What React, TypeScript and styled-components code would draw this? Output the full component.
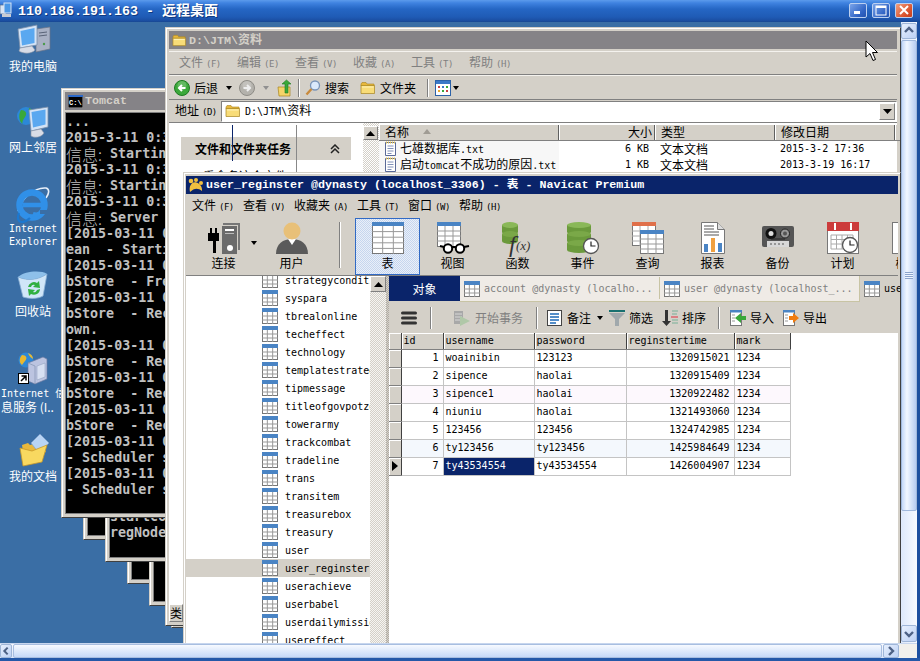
import React from "react";
import styled, { createGlobalStyle } from "styled-components";

const monoStack = `"DejaVu Sans Mono", "Noto Sans CJK SC", monospace`;
const boldStack = `"Liberation Mono", "Noto Sans CJK SC", monospace`;
const silver = "#d4d0c8";
const navy = "#0a246a";
const dither = (a: string, b: string) =>
  `repeating-conic-gradient(${a} 0 25%, ${b} 0 50%) 0 0 / 2px 2px`;

const Global = createGlobalStyle`
  html, body { margin: 0; padding: 0; width: 920px; height: 661px; overflow: hidden; }
  body { font: 12px/14px "Noto Sans CJK SC", sans-serif; color: #000; }
  * { box-sizing: border-box; }
`;

/* ---------- remote desktop frame ---------- */
const Frame = styled.div`
  width: 920px;
  height: 661px;
  display: flex;
  flex-direction: column;
  background: #1c4f9f;
  overflow: hidden;
`;
const RdpBar = styled.div`
  height: 22px;
  flex: none;
  display: flex;
  align-items: center;
  padding: 0 7px 0 0;
  background: linear-gradient(180deg, #5c9bec 0, #3f82e0 3px, #2566c4 9px, #1f5bb5 17px, #1a4da0 21px, #17468f 22px);
`;
const RdpTitle = styled.div`
  margin-left: 6px;
  flex: 1;
  color: #fff;
  font: bold 13.33px/22px ${boldStack};
  white-space: pre;
  text-shadow: 1px 1px 0 #103a80;
  span { font-size: 14px; }
`;
const WinButton = styled.div<{ $close?: boolean }>`
  width: 18px;
  height: 15px;
  margin: 0 0 2px 5px;
  border: 1px solid #bcd0f0;
  border-radius: 2px;
  display: flex;
  align-items: center;
  justify-content: center;
  background: ${({ $close }) =>
    $close
      ? "linear-gradient(135deg, #f0a080, #d8502a 70%, #c04020)"
      : "linear-gradient(135deg, #7aa4ea, #2f63c4 70%, #2452ae)"};
`;
const Middle = styled.div`
  flex: 1;
  min-height: 0;
  display: flex;
  padding-right: 3px;
`;
const Desktop = styled.div`
  position: relative;
  width: 901px;
  overflow: hidden;
  background: #3a6ea5;
`;
const VScroll = styled.div`
  width: 16px;
  flex: none;
  display: flex;
  flex-direction: column;
  padding: 1px 0;
  background: linear-gradient(90deg, #dde8fb, #f7faff);
`;
const ScrollBtn = styled.div<{ $w?: number; $h?: number }>`
  width: ${({ $w }) => $w ?? 16}px;
  height: ${({ $h }) => $h ?? 16}px;
  flex: none;
  display: flex;
  align-items: center;
  justify-content: center;
  border: 1px solid #9fb6d8;
  border-radius: 2px;
  background: linear-gradient(135deg, #e6effd, #bdd1f4);
`;
const VThumb = styled.div`
  height: 471px;
  margin-top: 1px;
  flex: none;
  display: flex;
  align-items: center;
  justify-content: center;
  border: 1px solid #a0b8dc;
  border-radius: 2px;
  background: linear-gradient(90deg, #c4d8f8, #f2f7ff 35%, #b6ccf2);
`;
const VTrack = styled.div`
  flex: 1;
`;
const Grip = styled.div`
  width: 8px;
  height: 7px;
  background: repeating-linear-gradient(180deg, #8ba4cc 0 1px, #eef4ff 1px 2px);
`;
const HScroll = styled.div`
  height: 15px;
  flex: none;
  margin-right: 3px;
  display: flex;
  background: linear-gradient(180deg, #f6f9ff, #dbe6fa);
  border-top: 1px solid #c7d6ee;
`;
const HThumb = styled.div`
  flex: 1;
  margin: 0 1px;
  border: 1px solid #a8bee0;
  border-radius: 2px;
  background: linear-gradient(180deg, #f7faff, #c6d9f8);
`;
const Corner = styled.div`
  width: 18px;
  flex: none;
  background: #f1f0ec;
`;
const BottomEdge = styled.div`
  height: 3px;
  flex: none;
  background: #2458a8;
`;

/* ---------- desktop icons ---------- */
const IconSpot = styled.div<{ $y: number }>`
  position: absolute;
  left: 0;
  top: ${({ $y }) => $y}px;
  width: 66px;
  display: flex;
  flex-direction: column;
  align-items: center;
  color: #fff;
  line-height: 12px;
  white-space: pre;
`;
const IconLine = styled.span<{ $latin?: boolean; $left?: boolean }>`
  height: ${({ $latin }) => ($latin ? 13 : 12)}px;
  align-self: ${({ $left }) => ($left ? "flex-start" : "center")};
  margin-left: ${({ $left }) => ($left ? 1 : 0)}px;
  font: ${({ $latin }) => ($latin ? `10px/12px ${monoStack}` : `12px/12px "Noto Sans CJK SC", sans-serif`)};
`;

/* ---------- generic classic window ---------- */
const ClassicWindow = styled.div<{ $x: number; $y: number; $w: number; $h: number; $pad?: number }>`
  position: absolute;
  left: ${({ $x }) => $x}px;
  top: ${({ $y }) => $y}px;
  width: ${({ $w }) => $w}px;
  height: ${({ $h }) => $h}px;
  display: flex;
  flex-direction: column;
  padding: ${({ $pad }) => $pad ?? 3}px;
  overflow: hidden;
  background: ${silver};
  border: 1px solid ${silver};
  border-right-color: #404040;
  border-bottom-color: #404040;
  box-shadow: inset 1px 1px 0 #fff;
`;
const InactiveTitle = styled.div`
  flex: none;
  height: 18px;
  margin-bottom: 2px;
  padding-left: 3px;
  display: flex;
  align-items: center;
  gap: 2px;
  background: #858387;
  color: ${silver};
  font: bold 11.67px/18px ${boldStack};
  white-space: pre;
`;
const Console = styled.div<{ $end?: boolean; $pad?: number }>`
  flex: 1;
  min-height: 0;
  display: flex;
  flex-direction: column;
  justify-content: ${({ $end }) => ($end ? "flex-end" : "flex-start")};
  padding: ${({ $pad }) => ($pad ? `0 0 ${$pad}px` : "1px 0 0")};
  background: #000;
  border: 1px solid #808080;
  border-right: 0;
  color: #c0c0c0;
  overflow: hidden;
  font: 600 13.33px/16px ${monoStack};
  white-space: pre;
`;
const ConsoleLine = styled.div`
  height: 16px;
  flex: none;
  overflow: visible;
`;
const ConsoleZh = styled.span`
  font: 300 16px/16px "Noto Sans CJK SC", sans-serif;
  vertical-align: top;
`;

/* ---------- explorer ---------- */
const ExpMenu = styled.div`
  flex: none;
  height: 24px;
  display: flex;
  align-items: center;
  gap: 17px;
  padding-left: 10px;
  color: #808080;
  border-top: 1px solid #f4f2ee;
  border-bottom: 1px solid #808080;
`;
const ExpToolbar = styled.div`
  flex: none;
  height: 25px;
  display: flex;
  align-items: center;
  padding-left: 5px;
  border-bottom: 1px solid #808080;
  border-top: 1px solid #f4f2ee;
`;
const Item = styled.span<{ $ml?: number }>`
  display: inline-flex;
  align-items: center;
  flex: none;
  margin-left: ${({ $ml }) => $ml ?? 0}px;
`;
const TextAfter = styled.span<{ $gap?: number }>`
  margin-left: ${({ $gap }) => $gap ?? 4}px;
`;
const Sep = styled.span<{ $ml: number; $h?: number }>`
  flex: none;
  width: 2px;
  height: ${({ $h }) => $h ?? 18}px;
  margin-left: ${({ $ml }) => $ml}px;
  border-left: 1px solid #808080;
  border-right: 1px solid #fff;
`;
const Caret = styled.span<{ $ml: number; $grey?: boolean }>`
  flex: none;
  width: 0;
  height: 0;
  margin-left: ${({ $ml }) => $ml}px;
  border: 3px solid transparent;
  border-bottom: 0;
  border-top: 4px solid ${({ $grey }) => ($grey ? "#909090" : "#000")};
`;
const Latin = styled.span<{ $size?: number }>`
  font: ${({ $size }) => $size ?? 10}px/14px ${monoStack};
  white-space: pre;
`;
const Key = styled.span`
  display: inline-block;
  width: 14px;
  margin-left: 3px;
  font: 9px/14px ${monoStack};
  letter-spacing: -0.5px;
`;
const AddressRow = styled.div`
  flex: none;
  height: 23px;
  display: flex;
  align-items: center;
  padding-left: 6px;
  border-bottom: 1px solid #808080;
`;
const AddressBox = styled.div`
  width: 676px;
  height: 21px;
  margin-left: 5px;
  padding-left: 3px;
  display: flex;
  align-items: center;
  background: #fff;
  border: 1px solid #808080;
  border-right-color: #fff;
  border-bottom-color: #fff;
`;
const AddressText = styled.div`
  flex: 1;
  margin-left: 4px;
`;
const ComboBtn = styled.div`
  width: 16px;
  height: 17px;
  margin-right: 1px;
  display: flex;
  align-items: center;
  justify-content: center;
  background: ${silver};
  border: 1px solid #808080;
  border-top-color: #fff;
  border-left-color: #fff;
`;
const ExpBody = styled.div`
  flex: 1;
  min-height: 0;
  display: flex;
  background: #fff;
  position: relative;
`;
const TaskPane = styled.div`
  width: 194px;
  flex: none;
  display: flex;
  flex-direction: column;
  padding-top: 14px;
`;
const TaskHead = styled.div`
  width: 170px;
  height: 23px;
  margin-left: 12px;
  padding: 0 11px 0 14px;
  flex: none;
  display: flex;
  align-items: center;
  justify-content: space-between;
  background: ${silver};
  font-weight: 700;
`;
const TaskRow = styled.div`
  margin: 9px 0 0 34px;
  flex: 1;
  white-space: pre;
`;
const StubBtn = styled.div`
  width: 14px;
  height: 18px;
  flex: none;
  display: flex;
  align-items: center;
  justify-content: center;
  background: ${silver};
  border: 1px solid #fff;
  border-right-color: #808080;
  border-bottom-color: #808080;
`;
const Artifact = styled.div<{ $x: number; $h: number; $c: string }>`
  position: absolute;
  left: ${({ $x }) => $x}px;
  top: 2px;
  width: 1px;
  height: ${({ $h }) => $h}px;
  background: ${({ $c }) => $c};
`;
const FileScroll = styled.div`
  width: 16px;
  flex: none;
  padding-top: 3px;
  background: ${dither("#d4d0c8", "#fff")};
`;
const RaisedBtn = styled.div<{ $h?: number; $w?: number }>`
  width: ${({ $w }) => $w ?? 16}px;
  height: ${({ $h }) => $h ?? 14}px;
  flex: none;
  display: flex;
  align-items: center;
  justify-content: center;
  background: ${silver};
  border: 1px solid #808080;
  border-top-color: #fff;
  border-left-color: #fff;
`;
const FileList = styled.div`
  flex: 1;
  display: flex;
  flex-direction: column;
  padding-top: 2px;
`;
const FileHead = styled.div`
  display: flex;
  height: 16px;
  border-bottom: 1px solid #808080;
`;
const HeadCell = styled.div<{ $w: number; $right?: boolean }>`
  width: ${({ $w }) => $w}px;
  flex: none;
  display: flex;
  align-items: center;
  justify-content: ${({ $right }) => ($right ? "flex-end" : "flex-start")};
  padding: 0 2px 2px 5px;
  background: ${silver};
  border-left: 1px solid #fff;
  border-right: 1px solid #606060;
`;
const SortMark = styled.span`
  width: 0;
  height: 0;
  margin-left: 14px;
  border: 4px solid transparent;
  border-top: 0;
  border-bottom: 5px solid #a09c94;
`;
const FileRow = styled.div`
  display: flex;
  height: 16px;
  align-items: center;
  white-space: pre;
`;
const FileCell = styled.div<{ $w: number; $right?: boolean; $shade?: boolean }>`
  width: ${({ $w }) => $w}px;
  height: 16px;
  flex: none;
  display: flex;
  align-items: center;
  justify-content: ${({ $right }) => ($right ? "flex-end" : "flex-start")};
  padding: ${({ $right }) => ($right ? "0 6px 0 0" : "0 0 0 5px")};
  background: ${({ $shade }) => ($shade ? "#f7f7f7" : "#fff")};
`;

/* ---------- navicat ---------- */
const NavTitle = styled.div`
  flex: none;
  height: 18px;
  margin-top: 1px;
  padding-left: 2px;
  display: flex;
  align-items: center;
  gap: 3px;
  background: ${navy};
  color: #fff;
  font: bold 11.67px/18px ${boldStack};
  white-space: pre;
`;
const NavMenu = styled.div`
  flex: none;
  height: 24px;
  padding-left: 6px;
  display: flex;
  align-items: center;
  gap: 10px;
`;
const NavToolbar = styled.div`
  flex: none;
  height: 58px;
  display: flex;
  overflow: hidden;
  padding-left: 5px;
  border-bottom: 1px solid #808080;
`;
const ToolItem = styled.div<{ $active?: boolean; $ml?: number }>`
  position: relative;
  width: 65px;
  height: 57px;
  flex: none;
  margin-left: ${({ $ml }) => $ml ?? 0}px;
  display: flex;
  flex-direction: column;
  align-items: center;
  padding-top: 4px;
  background: ${({ $active }) => ($active ? dither("#c6d6ee", "#e9eff9") : "transparent")};
  box-shadow: ${({ $active }) => ($active ? "inset 0 0 0 1px #316ac5" : "none")};
`;
const ToolLabel = styled.span`
  margin-top: 2px;
  font-size: 12px;
  line-height: 14px;
`;
const ToolCaret = styled.span`
  position: absolute;
  right: -1px;
  top: 23px;
  width: 0;
  height: 0;
  border: 3px solid transparent;
  border-bottom: 0;
  border-top: 4px solid #000;
`;
const NavSep = styled.div`
  flex: none;
  width: 2px;
  height: 46px;
  margin: 4px 14px 0 15px;
  border-left: 1px solid #808080;
  border-right: 1px solid #fff;
`;
const NavBody = styled.div`
  flex: 1;
  min-height: 0;
  display: flex;
`;
const Tree = styled.div`
  width: 184px;
  flex: none;
  background: #fff;
  overflow: hidden;
`;
const TreeRows = styled.div`
  margin-top: -5px;
`;
const TreeRow = styled.div<{ $selected?: boolean }>`
  height: 18px;
  padding-left: 76px;
  display: flex;
  align-items: center;
  gap: 7px;
  background: ${({ $selected }) => ($selected ? silver : "#fff")};
  font: 10px/16px ${monoStack};
  white-space: pre;
  overflow: hidden;
`;
const TreeName = styled.span`
  padding-top: 2px;
`;
const TreeScroll = styled.div`
  width: 16px;
  flex: none;
  background: ${dither("#d4d0c8", "#f6f5f2")};
`;
const Gutter = styled.div`
  width: 3px;
  flex: none;
  background: ${dither("#d4d0c8", "#b0aca4")};
`;
const RightPane = styled.div`
  flex: 1;
  min-width: 0;
  display: flex;
  flex-direction: column;
  background: #fff;
`;
const TabBar = styled.div`
  flex: none;
  height: 26px;
  display: flex;
  background: ${silver};
`;
const ObjectTab = styled.div`
  width: 71px;
  height: 25px;
  flex: none;
  display: flex;
  align-items: center;
  justify-content: center;
  background: ${navy};
  color: #fff;
`;
const TabGroup = styled.div`
  width: 400px;
  flex: none;
  height: 26px;
  display: flex;
  background: #efebe6;
  border-bottom: 1px solid #c8c4a4;
  border-right: 1px solid #c8c4a4;
`;
const DocTab = styled.div<{ $w?: number; $dark?: boolean }>`
  width: ${({ $w }) => $w ?? 200}px;
  flex: none;
  height: 25px;
  padding-left: 4px;
  display: flex;
  align-items: center;
  gap: 4px;
  color: ${({ $dark }) => ($dark ? "#000" : "#808080")};
  font: 10px/25px ${monoStack};
  white-space: pre;
  overflow: hidden;
`;
const TabDivider = styled.span`
  flex: none;
  width: 1px;
  height: 22px;
  margin-top: 1px;
  background: #c8c4a4;
`;
const GridToolbar = styled.div`
  flex: none;
  height: 31px;
  padding: 0 0 0 12px;
  display: flex;
  align-items: center;
  background: ${silver};
`;
const GreyText = styled.span`
  margin-left: 4px;
  color: #808080;
`;
const GridWrap = styled.div`
  flex: 1;
  background: #fff;
`;
const DataTable = styled.table`
  border-collapse: collapse;
  table-layout: fixed;
  width: 401px;
  font: 10px/16px ${monoStack};
`;
const Th = styled.th`
  height: 16px;
  padding: 0 0 0 2px;
  background: ${silver};
  border-right: 1px solid #404040;
  border-bottom: 1px solid #808080;
  box-shadow: inset 1px 1px 0 #fff;
  font-weight: 400;
  line-height: 15px;
  text-align: left;
`;
const RowHead = styled.td`
  padding: 0;
  background: ${silver};
  border-right: 1px solid #404040;
  border-bottom: 1px solid #808080;
  box-shadow: inset 1px 1px 0 #fff;
  vertical-align: middle;
`;
const Td = styled.td<{ $right?: boolean; $bg?: string; $sel?: boolean }>`
  height: 18px;
  padding: ${({ $right }) => ($right ? "0 4px 0 0" : "0 0 0 2px")};
  text-align: ${({ $right }) => ($right ? "right" : "left")};
  background: ${({ $sel, $bg }) => ($sel ? navy : $bg ?? "#fff")};
  color: ${({ $sel }) => ($sel ? "#fff" : "#000")};
  border-right: 1px solid #c4c4c4;
  border-bottom: 1px solid #c4c4c4;
  white-space: pre;
`;
const RowPointer = styled.span`
  display: block;
  width: 0;
  height: 0;
  margin-left: 3px;
  border: 5px solid transparent;
  border-right: 0;
  border-left: 6px solid #000;
`;
const Cursor = styled.svg`
  position: absolute;
  left: 865px;
  top: 18px;
`;

/* ---------- drawings ---------- */
const GridIcon: React.FC<{ w?: number; h?: number; head?: string; band?: number; cols?: number; rows?: number }> = ({
  w = 16, h = 16, head = "#4a84c4", band = 4, cols = 3, rows = 3,
}) => {
  const vs = Array.from({ length: cols - 1 }, (_, i) => ((i + 1) * w) / cols);
  const hs = Array.from({ length: rows - 1 }, (_, i) => band + ((i + 1) * (h - band)) / rows);
  return (
    <svg width={w} height={h} viewBox={`0 0 ${w} ${h}`} style={{ flex: "none" }}>
      <rect x=".5" y=".5" width={w - 1} height={h - 1} fill="#fff" stroke="#777" />
      <rect x="0" y="0" width={w} height={band} fill={head} />
      {vs.map((x) => <line key={x} x1={x} x2={x} y1={band} y2={h} stroke="#999" />)}
      {hs.map((y) => <line key={y} x1="0" x2={w} y1={y} y2={y} stroke="#999" />)}
    </svg>
  );
};
const Chevron: React.FC<{ dir: "up" | "down" | "left" | "right"; c?: string }> = ({ dir, c = "#4d6185" }) => {
  const d = { up: "M2 7l4-4 4 4", down: "M2 4l4 4 4-4", left: "M8 2L4 6l4 4", right: "M4 2l4 4-4 4" }[dir];
  return <svg width="12" height="12" viewBox="0 0 12 12"><path d={d} fill="none" stroke={c} strokeWidth="2.4" /></svg>;
};
const Tri: React.FC<{ up?: boolean }> = ({ up }) => (
  <svg width="9" height="5" viewBox="0 0 9 5"><path d={up ? "M4.500 0L9 5H0z" : "M0 0h9L4.500 5z"} fill="#000" /></svg>
);
const FolderIcon: React.FC<{ s?: number }> = ({ s = 16 }) => (
  <svg width={s} height={s} viewBox="0 0 16 16" style={{ flex: "none" }}>
    <path d="M1 4l1-1.500h4l1 1.500h7v2H1z" fill="#e8b83c" stroke="#a88420" strokeWidth=".6" />
    <path d="M1 13.500V5.500h13.500v8z" fill="#f8dc78" stroke="#a88420" strokeWidth=".7" />
    <path d="M2 7h11.500" stroke="#fff2b8" />
  </svg>
);
const RoundArrow: React.FC<{ on?: boolean }> = ({ on }) => (
  <svg width="16" height="16" viewBox="0 0 16 16" style={{ flex: "none" }}>
    <circle cx="8" cy="8" r="7.500" fill={on ? "#3ca83a" : "#b4b2ac"} stroke={on ? "#1c7a20" : "#8e8c86"} />
    <circle cx="8" cy="5.500" r="4.500" fill="#fff" opacity=".2" />
    {on ? <path d="M11.500 8H5.500M8 5L5 8l3 3" stroke="#fff" strokeWidth="2" fill="none" />
      : <path d="M4.500 8h6M8 5l3 3-3 3" stroke="#eee" strokeWidth="2" fill="none" />}
  </svg>
);
const UpFolder = () => (
  <svg width="16" height="18" viewBox="0 0 16 18" style={{ flex: "none" }}>
    <path d="M1 8h12v9H2z" fill="#f4d468" stroke="#a88420" strokeWidth=".7" />
    <path d="M8 14V5H5l4.500-4L14 5h-3v9z" fill="#3aa83a" stroke="#1c7a20" strokeWidth=".6" />
  </svg>
);
const SearchGlass = () => (
  <svg width="16" height="16" viewBox="0 0 16 16" style={{ flex: "none" }}>
    <circle cx="10" cy="5.500" r="4.500" fill="#dbe9fb" stroke="#7a94b8" strokeWidth="1.300" />
    <path d="M6.500 9L1.500 14.500" stroke="#c88a3c" strokeWidth="2.400" />
  </svg>
);
const ViewsIcon = () => (
  <svg width="16" height="16" viewBox="0 0 16 16" style={{ flex: "none" }}>
    <rect x=".5" y=".5" width="15" height="15" fill="#fff" stroke="#2c62a8" />
    <rect x="1" y="1" width="14" height="3" fill="#3a78c8" />
    {[[3, 6, "#c84040"], [7, 6, "#3a78c8"], [11, 6, "#3aa83a"], [3, 10, "#e8a830"], [7, 10, "#3aa83a"], [11, 10, "#c84040"]].map(([x, y, c]) => (
      <rect key={`${x}${y}`} x={x as number} y={y as number} width="2" height="2" fill={c as string} />
    ))}
  </svg>
);
const TextFile = () => (
  <svg width="13" height="16" viewBox="0 0 13 16" style={{ flex: "none" }}>
    <path d="M1.500 1.500h10v13h-10z" fill="#fff" stroke="#5a6a98" />
    <path d="M2 1.500h9" stroke="#e0c050" strokeDasharray="1 1" strokeWidth="2" />
    <path d="M3.500 5h6M3.500 7.500h6M3.500 10h6M3.500 12.500h4" stroke="#8090b8" />
  </svg>
);

const Db: React.FC<{ w: number; y?: number; layers?: number }> = ({ w, y = 0, layers = 3 }) => (
  <>
    {Array.from({ length: layers }, (_, i) => (
      <g key={i}>
        <rect x="0" y={y + 3 + i * 9} width={w} height="7" fill="#6b9a3c" />
        <ellipse cx={w / 2} cy={y + 10 + i * 9} rx={w / 2} ry="3" fill="#6b9a3c" />
        <ellipse cx={w / 2} cy={y + 3 + i * 9} rx={w / 2} ry="3" fill={i === 0 ? "#8ab858" : "#7aa848"} />
      </g>
    ))}
  </>
);
const Clock: React.FC<{ cx: number; cy: number; r: number }> = ({ cx, cy, r }) => (
  <g>
    <circle cx={cx} cy={cy} r={r} fill="#fff" stroke="#555" strokeWidth="1.300" />
    <path d={`M${cx} ${cy - r + 3}V${cy}H${cx + r - 3}`} fill="none" stroke="#222" strokeWidth="1.200" />
  </g>
);
const BigSvg: React.FC<{ children: React.ReactNode; w?: number }> = ({ children, w = 32 }) => (
  <svg width={w} height="32" viewBox={`0 0 ${w} 32`} style={{ flex: "none", overflow: "visible" }}>{children}</svg>
);
const ConnectIcon = () => (
  <BigSvg>
    <path d="M15 1h17v27h-2V3H15z" fill="#777" />
    <rect x="14" y="4" width="15" height="28" fill="#6b6b6b" />
    <rect x="17" y="7" width="9" height="2" fill="#fff" />
    <rect x="17" y="11" width="9" height="1" fill="#bbb" />
    <circle cx="22" cy="26" r="3" fill="#fff" />
    <path d="M0 12h2V7h2v5h3V7h2v5h2v8H8v12H5V20H0z" fill="#000" transform="translate(0 -1)" />
  </BigSvg>
);
const UserIcon = () => (
  <BigSvg>
    <path d="M0 32c0-10 7-15 16-15s16 5 16 15z" fill="#5a5a5a" />
    <path d="M12 17h8l-4 6z" fill="#fff" />
    <circle cx="16" cy="9" r="8.500" fill="#e8c078" />
  </BigSvg>
);
const ViewIcon = () => (
  <BigSvg w={32}>
    <rect x=".5" y=".5" width="23" height="24" fill="#fff" stroke="#777" />
    <rect x="0" y="0" width="24" height="4" fill="#4a84c4" />
    <path d="M8 4v21M16 4v21M0 9h24M0 14h24M0 19h24" stroke="#999" />
    <circle cx="11" cy="26.500" r="4.200" fill="#fff" stroke="#000" strokeWidth="2" />
    <circle cx="23" cy="26.500" r="4.200" fill="#fff" stroke="#000" strokeWidth="2" />
    <path d="M3 24l4 1M15 25h4M27 25l5-1" stroke="#000" strokeWidth="2" />
  </BigSvg>
);
const FuncIcon = () => (
  <BigSvg>
    <Db w={16} layers={2} />
    <text x="7" y="30" fontFamily="'Liberation Serif', serif" fontStyle="italic" fontSize="24" fill="#333">f</text>
    <text x="14" y="28" fontFamily="'Liberation Serif', serif" fontStyle="italic" fontSize="13" fill="#333">(x)</text>
  </BigSvg>
);
const EventIcon = () => (
  <BigSvg>
    <Db w={24} layers={3} />
    <Clock cx={24} cy={24} r={7.500} />
  </BigSvg>
);
const QueryIcon = () => (
  <BigSvg>
    <rect x=".5" y=".5" width="23" height="23" fill="#fff" stroke="#777" />
    <rect width="24" height="4" fill="#e0704a" />
    <path d="M8 4v20M16 4v20M0 9h24M0 14h24M0 19h24" stroke="#aaa" />
    <rect x="8.500" y="8.500" width="23" height="23" fill="#fff" stroke="#777" />
    <rect x="8" y="8" width="24" height="4" fill="#4a84c4" />
    <path d="M16 12v20M24 12v20M8 17h24M8 22h24M8 27h24" stroke="#999" />
  </BigSvg>
);
const ReportIcon = () => (
  <BigSvg w={24}>
    <path d="M.5.500h16l7 7v24H.5z" fill="#fff" stroke="#777" />
    <path d="M16.500.500v7h7" fill="#ddd" stroke="#777" />
    <path d="M3 4h10M3 7h10M3 10h15M3 13h15" stroke="#555" />
    <rect x="3" y="22" width="4" height="8" fill="#4a84c4" />
    <rect x="10" y="16" width="4" height="14" fill="#f0a040" />
    <rect x="17" y="21" width="4" height="9" fill="#4a84c4" />
  </BigSvg>
);
const BackupIcon = () => (
  <BigSvg>
    <rect y="4" width="32" height="21" rx="2" fill="#555" />
    <circle cx="9" cy="11.500" r="5.500" fill="#111" />
    <circle cx="9" cy="11.500" r="2.500" fill="#ddd" />
    <circle cx="23" cy="11.500" r="4.500" fill="#999" stroke="#222" />
    <circle cx="23" cy="11.500" r="2" fill="#555" />
    <path d="M9 17h14" stroke="#222" />
    <rect x="5" y="19" width="22" height="6" fill="#d8d8d8" />
    <path d="M8 22h16" stroke="#555" strokeDasharray="2 2" />
  </BigSvg>
);
const PlanIcon = () => (
  <BigSvg>
    <rect x=".5" y=".5" width="31" height="31" fill="#fff" stroke="#777" />
    <rect width="32" height="9" fill="#cc3c3c" />
    <rect x="7" y="1" width="2" height="7" fill="#fff" />
    <rect x="23" y="1" width="2" height="7" fill="#fff" />
    <path d="M4 13h22v14H4zM9.500 13v14M15 13v14M20.500 13v14M4 17.500h22M4 22h22" fill="none" stroke="#aaa" />
    <Clock cx={23} cy={23} r={7.500} />
  </BigSvg>
);
const ModelIcon = () => (
  <BigSvg>
    <rect x=".5" y=".5" width="26" height="31" fill="#fff" stroke="#777" />
    <path d="M16 4h5v5h-5zM16 23h5v5h-5z" fill="#aaa" />
    <path d="M18 9l7 7-7 7-7-7z" fill="#4a84c4" />
  </BigSvg>
);
const Burger = () => (
  <svg width="16" height="14" viewBox="0 0 16 14" style={{ flex: "none" }}>
    <path d="M1.500 2h13M1.500 7h13M1.500 12h13" stroke="#333" strokeWidth="3" strokeLinecap="round" />
  </svg>
);
const TxIcon = () => (
  <svg width="17" height="16" viewBox="0 0 17 16" style={{ flex: "none" }}>
    <rect x="0" y="1" width="9" height="13" fill="#a8a8a8" />
    <path d="M1 4h7M1 7h7M1 10h7" stroke="#d8d8d8" />
    <path d="M6 6l10 5-10 5z" fill="#b0c8a8" />
  </svg>
);
const NoteIcon = () => (
  <svg width="16" height="16" viewBox="0 0 16 16" style={{ flex: "none" }}>
    <rect x=".5" y=".5" width="14" height="15" fill="#fff" stroke="#444" />
    <path d="M3 4h9M3 7h9M3 10h9M3 13h6" stroke="#1c6ab8" strokeWidth="1.400" />
  </svg>
);
const FilterIcon = () => (
  <svg width="16" height="16" viewBox="0 0 16 16" style={{ flex: "none" }}>
    <rect width="16" height="2" fill="#187070" />
    <path d="M0 3h16l-6 6v7H6V9z" fill="#a0a8ac" />
  </svg>
);
const SortIcon = () => (
  <svg width="16" height="16" viewBox="0 0 16 16" style={{ flex: "none" }}>
    <path d="M3 0h3v11h3l-4.500 5L0 11h3z" fill="#333" />
    <path d="M10 1h6M10 4h5M10 10h6M10 13h6" stroke="#78b098" />
    <path d="M9 7h7" stroke="#e03040" />
  </svg>
);
const TransferIcon: React.FC<{ out?: boolean }> = ({ out }) => (
  <svg width="16" height="16" viewBox="0 0 16 16" style={{ flex: "none" }}>
    <rect x=".5" y=".5" width="11" height="15" fill="#fff" stroke="#777" />
    <rect x="0" y="0" width="12" height="2.500" fill="#4a84c4" />
    <path d="M2 5h3M2 8h3M2 11h3" stroke="#999" />
    {out ? <path d="M6 6h4V3l6 5-6 5v-3H6z" fill="#f07c10" /> : <path d="M16 6h-5V3L5 8l6 5v-3h5z" fill="#3aa83a" />}
  </svg>
);
const Dolphin = () => (
  <svg width="15" height="15" viewBox="0 0 15 15" style={{ flex: "none" }}>
    <path d="M2 14C.5 8 4 3 8.500 4.500 12 5.500 14.500 9 14 13 10 9.500 6 10 2 14z" fill="#f0c040" />
    <circle cx="3" cy="3" r="2.300" fill="#f0c040" />
    <circle cx="8" cy="2" r="2" fill="#f0c040" />
    <circle cx="13" cy="5" r="2" fill="#f0c040" />
  </svg>
);
const ConsoleGlyph = () => (
  <svg width="15" height="13" viewBox="0 0 15 13" style={{ flex: "none" }}>
    <rect width="15" height="13" fill="#000" stroke="#a8a8a8" />
    <rect x="0" y="0" width="15" height="2" fill="#2a68c8" />
    <text x="1" y="10" fontSize="7" fontFamily="'Liberation Mono', monospace" fill="#fff">C:\</text>
  </svg>
);

const Pc = () => (
  <svg width="36" height="36" viewBox="0 0 36 36">
    <path d="M21 5l14-2v22l-14 3z" fill="#a9b1c4" stroke="#6a7488" strokeWidth=".7" />
    <path d="M24 9l8-1M24 12l8-1" stroke="#5a6478" />
    <circle cx="29" cy="20" r="1.200" fill="#4a9a4a" />
    <path d="M3 5l19-4v20l-17 3z" fill="#d3e3f6" stroke="#7a8ea8" strokeWidth=".8" />
    <path d="M5.500 7l14-3v15l-12.500 2.500z" fill="#5aa8f0" />
    <path d="M5 24l12-2 3 4c-3 4-12 4-16 1z" fill="#d8dce6" stroke="#8a94a6" strokeWidth=".6" />
  </svg>
);
const Net = () => (
  <svg width="36" height="36" viewBox="0 0 36 36">
    <circle cx="11" cy="11" r="9" fill="#2c88d8" />
    <path d="M6 5c4 0 7 3 4 7s-3 6-2 7c-4-2-5-9-2-14zM14 3c4 1 6 5 5 10-3-3-6-7-5-10z" fill="#3aa83a" />
    <path d="M14 5l19-3v20l-17 4z" fill="#d3e3f6" stroke="#7a8ea8" strokeWidth=".8" />
    <path d="M16.500 7l14-2.500v15l-12.500 3z" fill="#5aa8f0" />
    <path d="M16 26l10-2 3 4c-3 5-10 5-13 3z" fill="#d8dce6" stroke="#8a94a6" strokeWidth=".6" />
  </svg>
);
const IeLogo = () => (
  <svg width="36" height="36" viewBox="0 0 36 36">
    <path d="M3 24C6 11 20 0 31 1c4 1 3 6 0 10" fill="none" stroke="#e8f0fa" strokeWidth="1.600" />
    <circle cx="17" cy="18" r="12.500" fill="none" stroke="#3090e8" strokeWidth="6.500" />
    <path d="M8 18h20" stroke="#3090e8" strokeWidth="4.500" />
    <path d="M18 27c4 1 8 0 10-3" fill="none" stroke="#3090e8" strokeWidth="4" />
    <path d="M25 25h8" stroke="#3a6ea5" strokeWidth="4" />
    <path d="M4 26c-2 5-1 9 3 9 3 0 6-2 8-4" fill="none" stroke="#1c78d0" strokeWidth="2.200" />
  </svg>
);
const RecycleBin = () => (
  <svg width="36" height="36" viewBox="0 0 36 36">
    <path d="M3 8c10 4 20 3 29-3l-4 22c-5 3-14 3-20 1z" fill="#d0e6f8" stroke="#8ab0d4" strokeWidth=".8" />
    <path d="M3 8c10 4 20 3 29-3-6-4-22-3-29 3z" fill="#8ec0ea" />
    <path d="M13 18a6 6 0 0 1 9-4l2-2 1 7-7-1 2-2a3 3 0 0 0-4 2zM25 20a6 6 0 0 1-9 5l-2 2-1-7 7 1-2 2a3 3 0 0 0 4-2z" fill="#30b040" />
  </svg>
);
const IisIcon = () => (
  <svg width="36" height="36" viewBox="0 0 36 36">
    <circle cx="11" cy="8" r="7.500" fill="#2c88d8" />
    <path d="M7 3c4 0 6 3 3 6l-3 4c-3-2-3-7 0-10zM13 1c3 1 5 3 5 6-2-1-4-3-5-6z" fill="#e8b830" />
    <path d="M13 11l15-6 4 2v20l-12 5-7-3z" fill="#bcc4e0" stroke="#6a7aa0" strokeWidth=".7" />
    <path d="M13 11l7 3v18" fill="none" stroke="#8a9ab8" strokeWidth=".8" />
    <path d="M22 14l8-3v14l-8 3z" fill="#d8e0f2" stroke="#8a9ab8" strokeWidth=".5" />
    <rect x="3.500" y="21.500" width="10" height="10" fill="#fff" stroke="#000" />
    <path d="M6 29l4.500-4.500M6.500 24h4.500v4.500" stroke="#000" strokeWidth="1.500" fill="none" />
  </svg>
);
const DocsFolder = () => (
  <svg width="36" height="36" viewBox="0 0 36 36">
    <path d="M7 11l6-2 2 2 10-3 6 10-22 7z" fill="#e8b83c" />
    <path d="M16 9L25 0l9 9-10 10z" fill="#b8d4f4" stroke="#7a9cc8" strokeWidth=".6" />
    <path d="M8 32L5 14l12 3 15-6-5 17z" fill="#f8d860" stroke="#c89828" strokeWidth=".8" />
  </svg>
);
const RdpGlyph = () => (
  <svg width="12" height="18" viewBox="0 0 12 18" style={{ flex: "none" }}>
    <rect x="0" y="3" width="6" height="9" fill="#d8e4f4" stroke="#506888" strokeWidth=".7" />
    <rect x="4" y="1" width="7" height="10" fill="#4a98e8" stroke="#d8e4f4" />
    <rect x="2" y="12" width="9" height="3" fill="#c8ccd4" />
  </svg>
);

/* ---------- data ---------- */
const CONSOLE_LINES: React.ReactNode[] = [
  "...",
  "2015-3-11 0:35",
  <><ConsoleZh>信息:</ConsoleZh> Starting</>,
  "2015-3-11 0:35",
  <><ConsoleZh>信息:</ConsoleZh> Starting</>,
  "2015-3-11 0:35",
  <><ConsoleZh>信息:</ConsoleZh> Server s</>,
  "[2015-03-11 00",
  "ean  - Starting",
  "[2015-03-11 00",
  "bStore  - Free",
  "[2015-03-11 00",
  "bStore  - Reco",
  "own.",
  "[2015-03-11 00",
  "bStore  - Reco",
  "[2015-03-11 00",
  "bStore  - Reco",
  "[2015-03-11 00",
  "bStore  - Reco",
  "[2015-03-11 00",
  "- Scheduler st",
  "[2015-03-11 00",
  "- Scheduler st",
];
const TABLES = [
  "strategyconditions", "syspara", "tbrealonline", "techeffect", "technology", "templatestrategy",
  "tipmessage", "titleofgovpotzone", "towerarmy", "trackcombat", "tradeline", "trans", "transitem",
  "treasurebox", "treasury", "user", "user_reginster", "userachieve", "userbabel", "userdailymission", "usereffect",
];
const ROWS = [
  [1, "woainibin", "123123", 1320915021],
  [2, "sipence", "haolai", 1320915409],
  [3, "sipence1", "haolai", 1320922482],
  [4, "niuniu", "haolai", 1321493060],
  [5, "123456", "123456", 1324742985],
  [6, "ty123456", "ty123456", 1425984649],
  [7, "ty43534554", "ty43534554", 1426004907],
] as const;
const rowBg = (id: number) => (id === 3 ? "#fdf8fd" : id === 6 ? "#f4f8fd" : "#fff");

const Mnemonic: React.FC<{ label: string; k: string }> = ({ label, k }) => (
  <span>{label}<Key>({k})</Key></span>
);

export default function App() {
  return (
    <Frame>
      <Global />
      <RdpBar>
        <RdpGlyph />
        <RdpTitle>110.186.191.163 - <span>远程桌面</span></RdpTitle>
        <WinButton>
          <svg width="10" height="10"><rect x="1" y="6" width="6" height="3" fill="#fff" /></svg>
        </WinButton>
        <WinButton>
          <svg width="12" height="11"><rect x="1" y="1" width="10" height="9" fill="none" stroke="#fff" /><rect x="1" y="1" width="10" height="2" fill="#fff" /></svg>
        </WinButton>
        <WinButton $close>
          <svg width="12" height="12"><path d="M2 2l8 8M10 2l-8 8" stroke="#fff" strokeWidth="2" /></svg>
        </WinButton>
      </RdpBar>

      <Middle>
        <Desktop>
          <IconSpot $y={2}><Pc /><IconLine>我的电脑</IconLine></IconSpot>
          <IconSpot $y={83}><Net /><IconLine>网上邻居</IconLine></IconSpot>
          <IconSpot $y={165}><IeLogo /><IconLine $latin>Internet</IconLine><IconLine $latin>Explorer</IconLine></IconSpot>
          <IconSpot $y={247}><RecycleBin /><IconLine>回收站</IconLine></IconSpot>
          <IconSpot $y={330}><IisIcon /><IconLine $latin $left>Internet 信</IconLine><IconLine $left>息服务 (I..</IconLine></IconSpot>
          <IconSpot $y={412}><DocsFolder /><IconLine>我的文档</IconLine></IconSpot>

          <ClassicWindow $x={83} $y={300} $w={90} $h={218}><Console $end $pad={16} /></ClassicWindow>
          <ClassicWindow $x={127} $y={340} $w={50} $h={222}><Console $end $pad={16} /></ClassicWindow>
          <ClassicWindow $x={149} $y={360} $w={30} $h={224}><Console $end $pad={32}>  at</Console></ClassicWindow>
          <ClassicWindow $x={105} $y={300} $w={70} $h={240}>
            <Console $end $pad={16}><span>startco</span><span>regNode</span></Console>
          </ClassicWindow>

          <ClassicWindow $x={61} $y={66} $w={120} $h={430}>
            <InactiveTitle>
              <ConsoleGlyph /><span>Tomcat</span>
            </InactiveTitle>
            <Console>
              {CONSOLE_LINES.map((line, i) => <ConsoleLine key={i}>{line}</ConsoleLine>)}
            </Console>
          </ClassicWindow>

          <ClassicWindow $x={171} $y={400} $w={20} $h={206} />

          <ClassicWindow $x={165} $y={5} $w={736} $h={599}>
            <InactiveTitle>
              <FolderIcon s={15} /><span>D:\JTM\<span style={{ fontFamily: "'Noto Sans CJK SC'", fontSize: 12 }}>资料</span></span>
            </InactiveTitle>
            <ExpMenu>
              <Mnemonic label="文件" k="F" />
              <Mnemonic label="编辑" k="E" />
              <Mnemonic label="查看" k="V" />
              <Mnemonic label="收藏" k="A" />
              <Mnemonic label="工具" k="T" />
              <Mnemonic label="帮助" k="H" />
            </ExpMenu>
            <ExpToolbar>
              <Item><RoundArrow on /><TextAfter>后退</TextAfter></Item>
              <Caret $ml={8} />
              <Item $ml={7}><RoundArrow /></Item>
              <Caret $ml={8} $grey />
              <Item $ml={8}><UpFolder /></Item>
              <Sep $ml={5} />
              <Item $ml={5}><SearchGlass /><TextAfter>搜索</TextAfter></Item>
              <Item $ml={11}><FolderIcon /><TextAfter>文件夹</TextAfter></Item>
              <Sep $ml={11} />
              <Item $ml={6}><ViewsIcon /></Item>
              <Caret $ml={2} />
            </ExpToolbar>
            <AddressRow>
              <Mnemonic label="地址" k="D" />
              <AddressBox>
                <FolderIcon />
                <AddressText><Latin>D:\JTM\</Latin>资料</AddressText>
                <ComboBtn><Tri /></ComboBtn>
              </AddressBox>
            </AddressRow>
            <ExpBody>
              <TaskPane>
                <TaskHead>
                  <span>文件和文件夹任务</span>
                  <svg width="10" height="10" viewBox="0 0 10 10"><path d="M1 5l4-4 4 4M1 9l4-4 4 4" fill="none" stroke="#222" strokeWidth="1.500" /></svg>
                </TaskHead>
                <TaskRow>重命名这个文件</TaskRow>
                <StubBtn>类</StubBtn>
              </TaskPane>
              <Artifact $x={63} $h={36} $c={navy} />
              <Artifact $x={127} $h={50} $c="#888" />
              <FileScroll><RaisedBtn $w={15}><Tri up /></RaisedBtn></FileScroll>
              <FileList>
                <FileHead>
                  <HeadCell $w={180}><span>名称</span><SortMark /></HeadCell>
                  <HeadCell $w={96} $right>大小</HeadCell>
                  <HeadCell $w={120}>类型</HeadCell>
                  <HeadCell $w={120}>修改日期</HeadCell>
                  <HeadCell $w={6} />
                </FileHead>
                <FileRow>
                  <FileCell $w={180} $shade><TextFile /><TextAfter $gap={3}>七雄数据库<Latin>.txt</Latin></TextAfter></FileCell>
                  <FileCell $w={96} $right><Latin>6 KB</Latin></FileCell>
                  <FileCell $w={120}>文本文档</FileCell>
                  <FileCell $w={120}><Latin>2015-3-2 17:36</Latin></FileCell>
                </FileRow>
                <FileRow>
                  <FileCell $w={180} $shade><TextFile /><TextAfter $gap={3}>启动<Latin>tomcat</Latin>不成功的原因<Latin>.txt</Latin></TextAfter></FileCell>
                  <FileCell $w={96} $right><Latin>1 KB</Latin></FileCell>
                  <FileCell $w={120}>文本文档</FileCell>
                  <FileCell $w={120}><Latin>2013-3-19 16:17</Latin></FileCell>
                </FileRow>
              </FileList>
            </ExpBody>
          </ClassicWindow>

          <ClassicWindow $x={183} $y={150} $w={718} $h={475} $pad={2}>
            <NavTitle>
              <Dolphin />
              <span>user_reginster @dynasty (localhost_3306) - 表 - Navicat Premium</span>
            </NavTitle>
            <NavMenu>
              <Mnemonic label="文件" k="F" />
              <Mnemonic label="查看" k="V" />
              <Mnemonic label="收藏夹" k="A" />
              <Mnemonic label="工具" k="T" />
              <Mnemonic label="窗口" k="W" />
              <Mnemonic label="帮助" k="H" />
            </NavMenu>
            <NavToolbar>
              <ToolItem><ConnectIcon /><ToolLabel>连接</ToolLabel><ToolCaret /></ToolItem>
              <ToolItem $ml={3}><UserIcon /><ToolLabel>用户</ToolLabel></ToolItem>
              <NavSep />
              <ToolItem $active><GridIcon w={32} h={32} cols={3} rows={5} /><ToolLabel>表</ToolLabel></ToolItem>
              <ToolItem><ViewIcon /><ToolLabel>视图</ToolLabel></ToolItem>
              <ToolItem><FuncIcon /><ToolLabel>函数</ToolLabel></ToolItem>
              <ToolItem><EventIcon /><ToolLabel>事件</ToolLabel></ToolItem>
              <ToolItem><QueryIcon /><ToolLabel>查询</ToolLabel></ToolItem>
              <ToolItem><ReportIcon /><ToolLabel>报表</ToolLabel></ToolItem>
              <ToolItem><BackupIcon /><ToolLabel>备份</ToolLabel></ToolItem>
              <ToolItem><PlanIcon /><ToolLabel>计划</ToolLabel></ToolItem>
              <ToolItem><ModelIcon /><ToolLabel>模型</ToolLabel></ToolItem>
            </NavToolbar>
            <NavBody>
              <Tree>
                <TreeRows>
                  {TABLES.map((name) => (
                    <TreeRow key={name} $selected={name === "user_reginster"}>
                      <GridIcon />
                      <TreeName>{name}</TreeName>
                    </TreeRow>
                  ))}
                </TreeRows>
              </Tree>
              <TreeScroll><RaisedBtn $h={16}><Tri up /></RaisedBtn></TreeScroll>
              <Gutter />
              <RightPane>
                <TabBar>
                  <ObjectTab>对象</ObjectTab>
                  <TabGroup>
                    <DocTab $w={199}><GridIcon />account @dynasty (localho...</DocTab>
                    <TabDivider />
                    <DocTab $w={199}><GridIcon />user @dynasty (localhost_...</DocTab>
                  </TabGroup>
                  <DocTab $w={60} $dark><GridIcon />user_reginster</DocTab>
                </TabBar>
                <GridToolbar>
                  <Burger />
                  <Sep $ml={13} $h={22} />
                  <Item $ml={22}><TxIcon /><GreyText>开始事务</GreyText></Item>
                  <Sep $ml={13} $h={22} />
                  <Item $ml={9}><NoteIcon /><TextAfter>备注</TextAfter></Item>
                  <Caret $ml={6} />
                  <Item $ml={6}><FilterIcon /><TextAfter>筛选</TextAfter></Item>
                  <Item $ml={9}><SortIcon /><TextAfter>排序</TextAfter></Item>
                  <Sep $ml={12} $h={22} />
                  <Item $ml={10}><TransferIcon /><TextAfter>导入</TextAfter></Item>
                  <Item $ml={9}><TransferIcon out /><TextAfter>导出</TextAfter></Item>
                </GridToolbar>
                <GridWrap>
                  <DataTable>
                    <colgroup>
                      <col width="12" /><col width="42" /><col width="91" /><col width="92" /><col width="108" /><col width="56" />
                    </colgroup>
                    <thead>
                      <tr>
                        <Th />
                        <Th>id</Th><Th>username</Th><Th>password</Th><Th>reginstertime</Th><Th>mark</Th>
                      </tr>
                    </thead>
                    <tbody>
                      {ROWS.map(([id, user, pass, time]) => (
                        <tr key={id}>
                          <RowHead>{id === 7 && <RowPointer />}</RowHead>
                          <Td $right $bg={rowBg(id)}>{id}</Td>
                          <Td $bg={rowBg(id)} $sel={id === 7}>{user}</Td>
                          <Td $bg={rowBg(id)}>{pass}</Td>
                          <Td $right $bg={rowBg(id)}>{time}</Td>
                          <Td $bg={rowBg(id)}>1234</Td>
                        </tr>
                      ))}
                    </tbody>
                  </DataTable>
                </GridWrap>
              </RightPane>
            </NavBody>
          </ClassicWindow>

          <Cursor width="14" height="22" viewBox="0 0 14 22">
            <path d="M1 1v16l4-3.500 3 7 2.500-1-3-7h5z" fill="#fff" stroke="#000" />
          </Cursor>
        </Desktop>
        <VScroll>
          <ScrollBtn><Chevron dir="up" /></ScrollBtn>
          <VThumb><Grip /></VThumb>
          <VTrack />
          <ScrollBtn $h={17}><Chevron dir="down" /></ScrollBtn>
        </VScroll>
      </Middle>
      <HScroll>
        <ScrollBtn $w={12} $h={14}><Chevron dir="left" /></ScrollBtn>
        <HThumb />
        <ScrollBtn $w={16} $h={14}><Chevron dir="right" /></ScrollBtn>
        <Corner />
      </HScroll>
      <BottomEdge />
    </Frame>
  );
}
